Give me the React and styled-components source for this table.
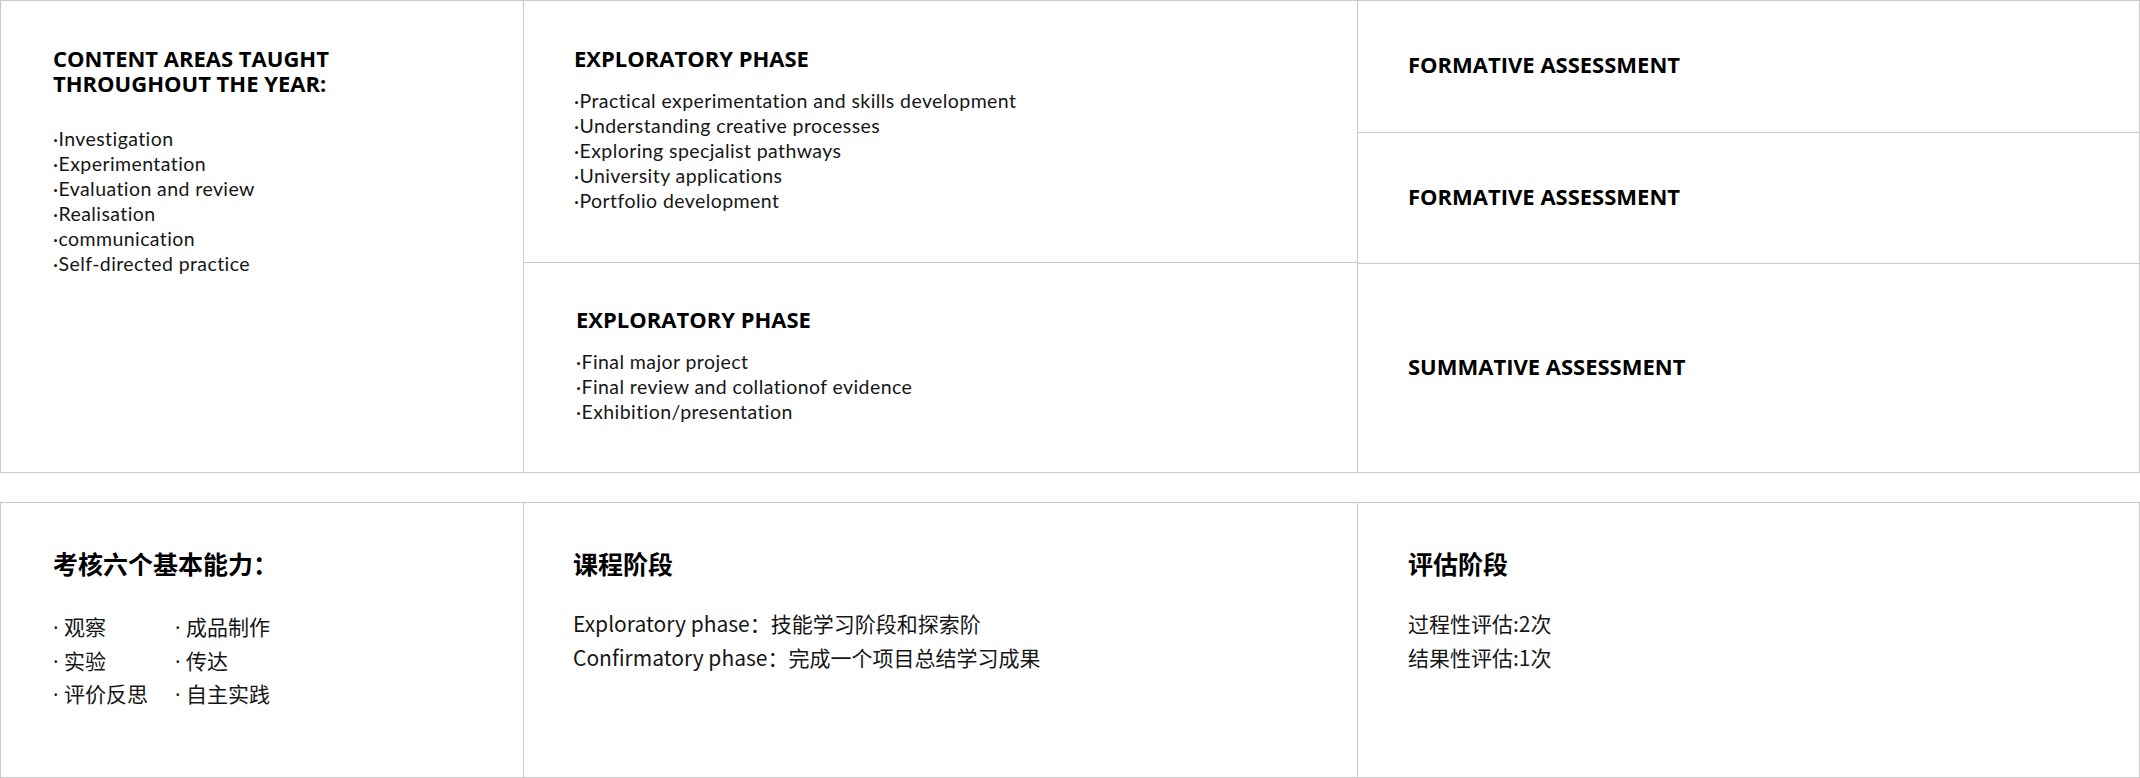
import React from "react";
import styled, { createGlobalStyle } from "styled-components";

const GlobalStyle = createGlobalStyle`
  html, body {
    margin: 0;
    padding: 0;
    background: #fff;
  }
  * {
    box-sizing: border-box;
  }
`;

const LINE = "#c9c9c9";

const Page = styled.div`
  display: flex;
  flex-direction: column;
  gap: 29px;
  width: 2140px;
`;

const Table = styled.div`
  display: grid;
  grid-template-columns: 522px 834px 1fr;
  height: ${(p) => p.height}px;
  border: 1px solid ${LINE};
`;

const Column = styled.div`
  display: flex;
  flex-direction: column;
  border-left: ${(p) => (p.first ? "none" : `1px solid ${LINE}`)};
`;

const Cell = styled.div`
  display: flex;
  flex-direction: column;
  justify-content: ${(p) => (p.center ? "center" : "flex-start")};
  height: ${(p) => (p.h ? `${p.h}px` : "auto")};
  flex: ${(p) => (p.h ? "none" : "1")};
  padding: ${(p) => p.pad || "0 50px 4px"};
  border-top: ${(p) => (p.top ? `1px solid ${LINE}` : "none")};
`;

const Heading = styled.h2`
  margin: 0;
  font-family: "Open Sans", "Noto Sans CJK SC", sans-serif;
  font-weight: 700;
  font-size: 22px;
  line-height: 25px;
  color: #000;
`;

const List = styled.ul`
  list-style: none;
  margin: ${(p) => p.mt || 17}px 0 0;
  padding: 0;
  font-family: Lato, "Liberation Sans", sans-serif;
  font-size: 19.5px;
  letter-spacing: 0.42px;
  line-height: 25px;
  color: #161616;
`;

const Item = styled.li`
  white-space: nowrap;
`;

const CnHeading = styled.h2`
  margin: 0;
  font-family: "Noto Sans CJK SC", sans-serif;
  font-weight: 700;
  font-size: 25px;
  line-height: 32px;
  color: #000;
`;

const CnLines = styled.div`
  margin-top: ${(p) => p.mt || 28}px;
  font-family: "Noto Sans CJK SC", sans-serif;
  font-size: 21px;
  line-height: 33.5px;
  color: #161616;
`;

const SkillGrid = styled(CnLines)`
  display: grid;
  grid-template-columns: 122px auto;
  font-family: "Open Sans", "Noto Sans CJK SC", sans-serif;
`;

const Line = styled.div`
  white-space: nowrap;
`;

const contentAreas = [
  "Investigation",
  "Experimentation",
  "Evaluation and review",
  "Realisation",
  "communication",
  "Self-directed practice",
];

const phaseOne = [
  "Practical experimentation and skills development",
  "Understanding creative processes",
  "Exploring specjalist pathways",
  "University applications",
  "Portfolio development",
];

const phaseTwo = [
  "Final major project",
  "Final review and collationof evidence",
  "Exhibition/presentation",
];

const skills = ["观察", "成品制作", "实验", "传达", "评价反思", "自主实践"];

export default function App() {
  return (
    <>
      <GlobalStyle />
      <Page>
        <Table height={473}>
          <Column first>
            <Cell pad="45px 50px 0 52px">
              <Heading>
                CONTENT AREAS TAUGHT
                <br />
                THROUGHOUT THE YEAR:
              </Heading>
              <List mt={30}>
                {contentAreas.map((t) => (
                  <Item key={t}>·{t}</Item>
                ))}
              </List>
            </Cell>
          </Column>
          <Column>
            <Cell h={261} center>
              <Heading>EXPLORATORY PHASE</Heading>
              <List>
                {phaseOne.map((t) => (
                  <Item key={t}>·{t}</Item>
                ))}
              </List>
            </Cell>
            <Cell top center pad="0 50px 4px 52px">
              <Heading>EXPLORATORY PHASE</Heading>
              <List>
                {phaseTwo.map((t) => (
                  <Item key={t}>·{t}</Item>
                ))}
              </List>
            </Cell>
          </Column>
          <Column>
            <Cell h={131} center>
              <Heading>FORMATIVE ASSESSMENT</Heading>
            </Cell>
            <Cell h={131} top center>
              <Heading>FORMATIVE ASSESSMENT</Heading>
            </Cell>
            <Cell top center>
              <Heading>SUMMATIVE ASSESSMENT</Heading>
            </Cell>
          </Column>
        </Table>

        <Table height={276}>
          <Column first>
            <Cell pad="44px 50px 0 52px">
              <CnHeading>考核六个基本能力：</CnHeading>
              <SkillGrid mt={32}>
                {skills.map((s) => (
                  <Line key={s}>· {s}</Line>
                ))}
              </SkillGrid>
            </Cell>
          </Column>
          <Column>
            <Cell pad="44px 50px 0 49px">
              <CnHeading>课程阶段</CnHeading>
              <CnLines>
                <Line>Exploratory phase：技能学习阶段和探索阶</Line>
                <Line>Confirmatory phase：完成一个项目总结学习成果</Line>
              </CnLines>
            </Cell>
          </Column>
          <Column>
            <Cell pad="44px 50px 0 50px">
              <CnHeading>评估阶段</CnHeading>
              <CnLines>
                <Line>过程性评估:2次</Line>
                <Line>结果性评估:1次</Line>
              </CnLines>
            </Cell>
          </Column>
        </Table>
      </Page>
    </>
  );
}
